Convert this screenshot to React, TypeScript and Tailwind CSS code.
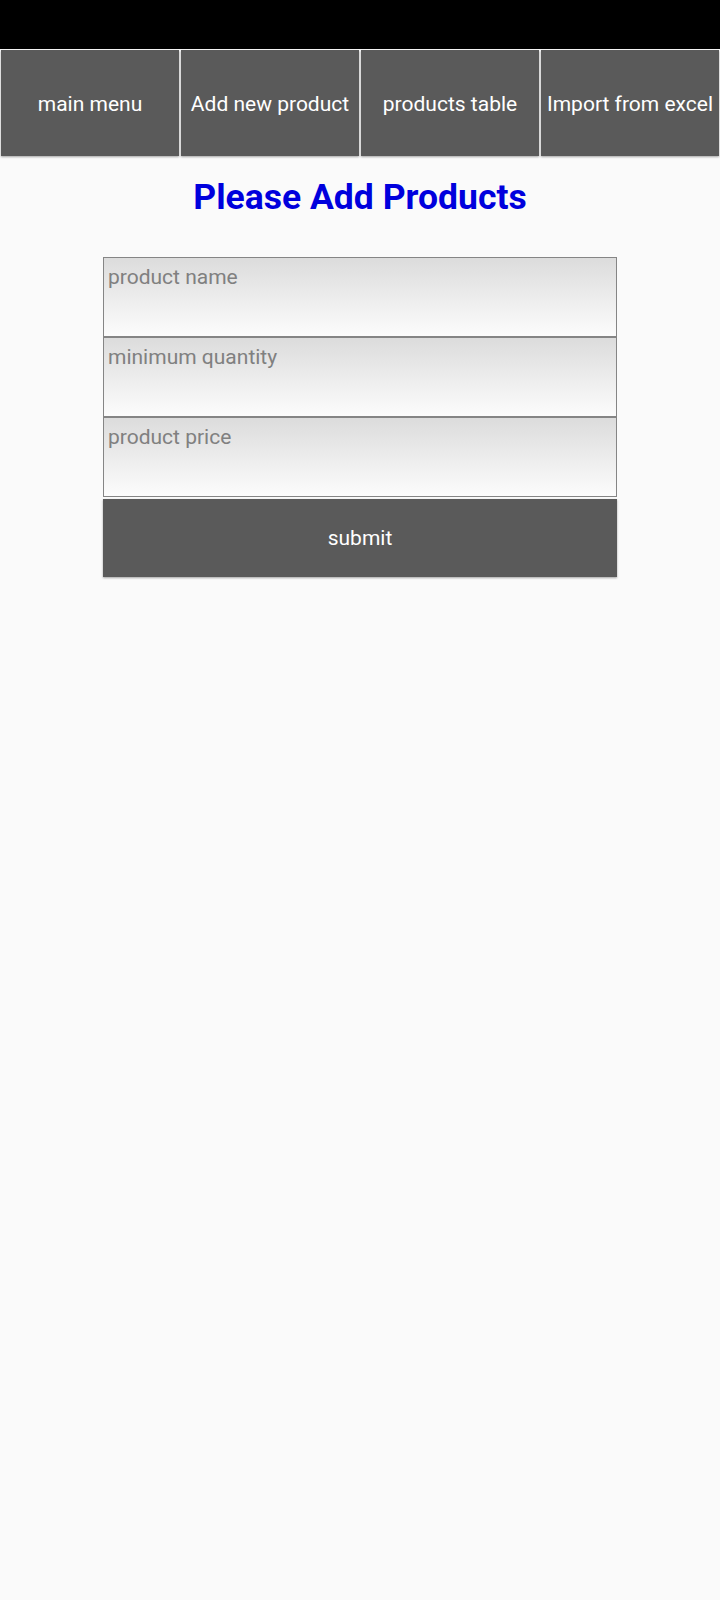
import React from "react";

const navItems = ["main menu", "Add new product", "products table", "Import from excel"];

function NavButton({ label }: { label: string }) {
  return (
    <div className="flex-1 px-px">
      <button className="w-full h-[106px] pt-[2px] bg-[#5a5a5a] text-white text-[21px] leading-none shadow-[0_1px_2px_rgba(0,0,0,0.35)] whitespace-nowrap flex items-center justify-center">
        {label}
      </button>
    </div>
  );
}

function Field({ placeholder }: { placeholder: string }) {
  return (
    <textarea
      placeholder={placeholder}
      className="block w-full h-[80px] resize-none border border-[#858585] bg-gradient-to-b from-[#dcdcdc] to-[#fcfcfc] px-[4px] pt-[7px] text-[21px] leading-[normal] text-[#333] placeholder:text-[#808080] outline-none"
    />
  );
}

export default function App() {
  return (
    <div
      className="min-h-[1600px] w-[720px] bg-[#fafafa]"
      style={{ fontFamily: "Roboto, 'Noto Sans', sans-serif" }}
    >
      <div className="h-[49px] bg-black" />
      <nav className="flex pt-px">
        {navItems.map((l) => (
          <NavButton key={l} label={l} />
        ))}
      </nav>
      <h1 className="mt-[20px] text-center text-[35.5px] leading-[normal] font-bold text-[#0000dd]">
        Please Add Products
      </h1>
      <form
        className="mx-auto mt-[39px] w-[514px] flex flex-col"
        onSubmit={(e) => e.preventDefault()}
      >
        <Field placeholder="product name" />
        <Field placeholder="minimum quantity" />
        <Field placeholder="product price" />
        <button
          type="submit"
          className="mt-[2px] h-[78px] pt-[2px] w-full bg-[#5a5a5a] text-[21px] text-white shadow-[0_1px_2px_rgba(0,0,0,0.35)]"
        >
          submit
        </button>
      </form>
    </div>
  );
}
